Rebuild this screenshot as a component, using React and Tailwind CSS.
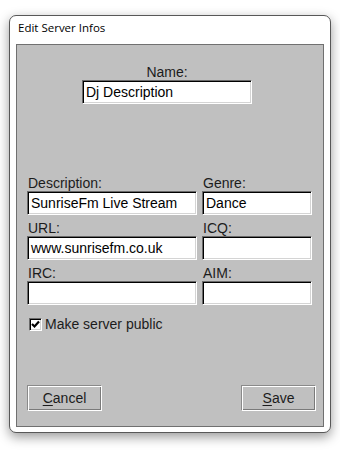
import React from "react";

const sunken =
  "border border-t-[#6a6a6a] border-l-[#6a6a6a] border-b-white border-r-white shadow-[inset_1px_1px_0_#000,inset_-1px_-1px_0_#d4d4d4] bg-white";

const Field = ({ label, value, width }) => (
  <div className="flex flex-col" style={{ width }}>
    <div className="h-[16px] leading-[16px] pl-[1px] text-[#1c1c1c]">{label}</div>
    <div className={`h-[24px] flex items-center pl-[3px] text-black leading-[16px] ${sunken}`}>
      {value}
    </div>
  </div>
);

const Button = ({ first, rest }) => (
  <button
    type="button"
    className="w-[75px] h-[26px] bg-[#c0c0c0] border border-t-[#8a8a8a] border-l-[#8a8a8a] border-b-white border-r-white shadow-[inset_1px_1px_0_#fff,inset_-1px_-1px_0_#7a7a7a] text-[14px] leading-[16px] text-[#1c1c1c]"
  >
    <span className="underline underline-offset-2">{first}</span>
    {rest}
  </button>
);

export default function App() {
  return (
    <div className="w-[340px] h-[450px] bg-white pt-[15px] pl-[9px] font-['Liberation_Sans',Arial,sans-serif] text-[14px]">
      <div className="w-[322px] h-[418px] flex flex-col bg-white border border-[#585858] rounded-[7px] shadow-[0_4px_12px_rgba(0,0,0,0.4)]">
        <div className="h-[28px] pt-[4px] pl-[8px] font-['Open_Sans',sans-serif] text-[11.5px] leading-[16px] text-black">
          Edit Server Infos
        </div>
        <div className="mx-[6px] mb-[5px] flex-1 flex flex-col border border-[#707070] bg-[#c0c0c0] pt-[19px] pb-[15px]">
          <div className="ml-[65px] w-[170px] flex flex-col items-center">
            <div className="h-[16px] leading-[16px] text-[#1c1c1c]">Name:</div>
            <div className={`w-full h-[24px] flex items-center pl-[3px] leading-[16px] text-black ${sunken}`}>
              Dj Description
            </div>
          </div>

          <div className="mt-[71px] ml-[10px] grid grid-cols-[170px_110px] gap-x-[5px] gap-y-[5px]">
            <Field label="Description:" value="SunriseFm Live Stream" width={170} />
            <Field label="Genre:" value="Dance" width={110} />
            <Field label="URL:" value="www.sunrisefm.co.uk" width={170} />
            <Field label="ICQ:" value="" width={110} />
            <Field label="IRC:" value="" width={170} />
            <Field label="AIM:" value="" width={110} />
          </div>

          <label className="mt-[11px] ml-[12px] h-[16px] flex items-center gap-[3px] leading-[16px] text-[#1c1c1c]">
            <span className={`w-[13px] h-[13px] flex items-center justify-center ${sunken}`}>
              <svg width="9" height="9" viewBox="0 0 9 9">
                <path d="M1 4 L3.5 6.5 L8 1.5" fill="none" stroke="#000" strokeWidth="2.2" />
              </svg>
            </span>
            Make server public
          </label>

          <div className="mt-[53px] ml-[10px] mr-[7px] flex justify-between">
            <Button first="C" rest="ancel" />
            <Button first="S" rest="ave" />
          </div>
        </div>
      </div>
    </div>
  );
}
